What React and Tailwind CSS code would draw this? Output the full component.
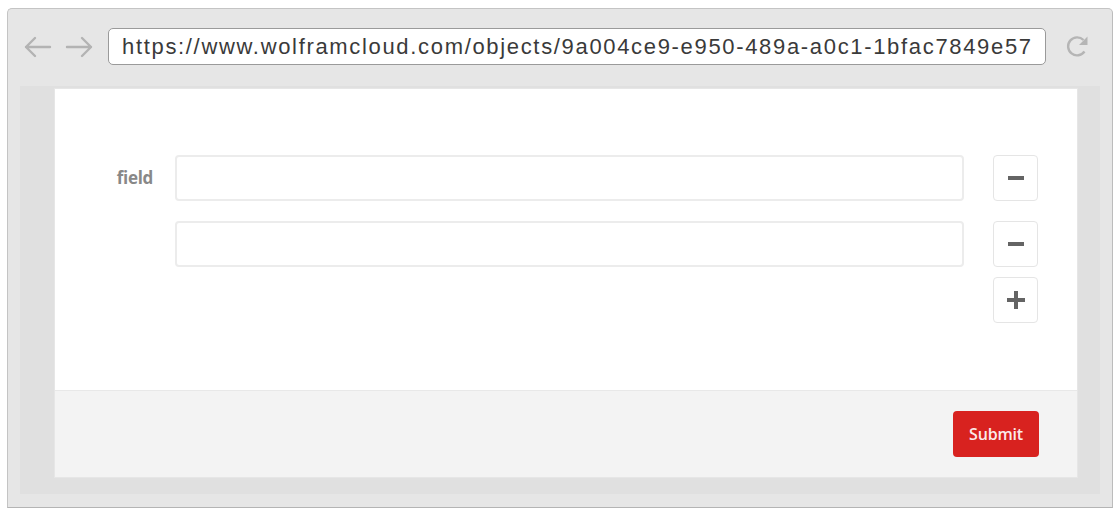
import React from 'react';

function Arrow({ flip }) {
    return (
        <svg width="30" height="22" viewBox="0 0 30 22" className={flip ? 'scale-x-[-1]' : ''}>
            <path d="M28 11H4M13 2L4 11l9 9" fill="none" stroke="#b3b3b3" strokeWidth="2.4" strokeLinecap="round" strokeLinejoin="round" />
        </svg>
    );
}

function Reload() {
    return (
        <svg width="28" height="26" viewBox="0 0 28 26">
            <path d="M20.5 17.5A9 9 0 1 1 19.5 6" fill="none" stroke="#b5b5b5" strokeWidth="2.4" />
            <path d="M23.5 2.5v8.5h-8.5z" fill="#b5b5b5" />
        </svg>
    );
}

function SquareButton({ children }) {
    return (
        <button className="w-[45px] h-[46px] shrink-0 rounded-[4px] border border-[#e5e5e5] bg-white flex items-center justify-center">
            {children}
        </button>
    );
}

const Minus = () => <span className="block w-[16px] h-[4px] bg-[#646464]" />;

const Plus = () => (
    <span className="relative block w-[18px] h-[18px]">
        <span className="absolute left-0 top-[7px] w-[18px] h-[4px] bg-[#646464]" />
        <span className="absolute top-0 left-[7px] w-[4px] h-[18px] bg-[#646464]" />
    </span>
);

export default function App() {
    return (
        <div className="w-[1120px] h-[516px] bg-white pt-[8px] pl-[7px]">
            <div className="w-[1106px] h-[500px] rounded-t-[5px] border border-[#c4c4c4] border-b-[#b4b4b4] border-r-[#bcbcbc] bg-[#e6e6e6] flex flex-col">
                {/* toolbar */}
                <div className="h-[77px] shrink-0 flex items-center pl-[14px] pr-[20px] pb-[2px]">
                    <Arrow />
                    <div className="ml-[13px]"><Arrow flip /></div>
                    <div className="ml-[13px] h-[37px] flex-1 rounded-[5px] border border-[#9a9a9a] bg-white flex items-center pl-[13px] overflow-hidden">
                        <span className="whitespace-nowrap text-[22px] text-[#3a3a3a] tracking-[1.67px]" style={{ fontFamily: '"Liberation Sans", Arial, sans-serif' }}>
                            https://www.wolframcloud.com/objects/9a004ce9-e950-489a-a0c1-1bfac7849e57
                        </span>
                    </div>
                    <div className="ml-[18px]"><Reload /></div>
                </div>

                {/* page area */}
                <div className="flex-1 mx-[12px] mb-[13px] bg-[#e0e0e0] pl-[34px] pr-[22px] pt-[2px] pb-[16px] flex">
                    <div className="flex-1 bg-white border border-[#e6e6e6] flex flex-col" style={{ fontFamily: '"Open Sans", sans-serif' }}>
                        <div className="flex-1 pt-[66px] pr-[39px]">
                            <div className="flex items-center">
                                <div className="w-[120px] shrink-0 pr-[22px] text-right text-[17px] font-bold text-[#888888] tracking-[-0.3px]">field</div>
                                <div className="flex-1 h-[46px] rounded-[4px] border-2 border-[#ececec]" />
                                <div className="ml-[29px]"><SquareButton><Minus /></SquareButton></div>
                            </div>
                            <div className="flex items-center mt-[20px]">
                                <div className="w-[120px] shrink-0" />
                                <div className="flex-1 h-[46px] rounded-[4px] border-2 border-[#ececec]" />
                                <div className="ml-[29px]"><SquareButton><Minus /></SquareButton></div>
                            </div>
                            <div className="flex justify-end mt-[10px]">
                                <SquareButton><Plus /></SquareButton>
                            </div>
                        </div>
                        <div className="h-[87px] shrink-0 bg-[#f3f3f3] border-t border-[#e8e8e8] flex justify-end items-start pt-[20px] pr-[38px]">
                            <button className="w-[86px] h-[46px] rounded-[4px] bg-[#d8221f] text-[#fbeaea] text-[16px] font-semibold tracking-[-0.2px]">Submit</button>
                        </div>
                    </div>
                </div>
            </div>
        </div>
    );
}
